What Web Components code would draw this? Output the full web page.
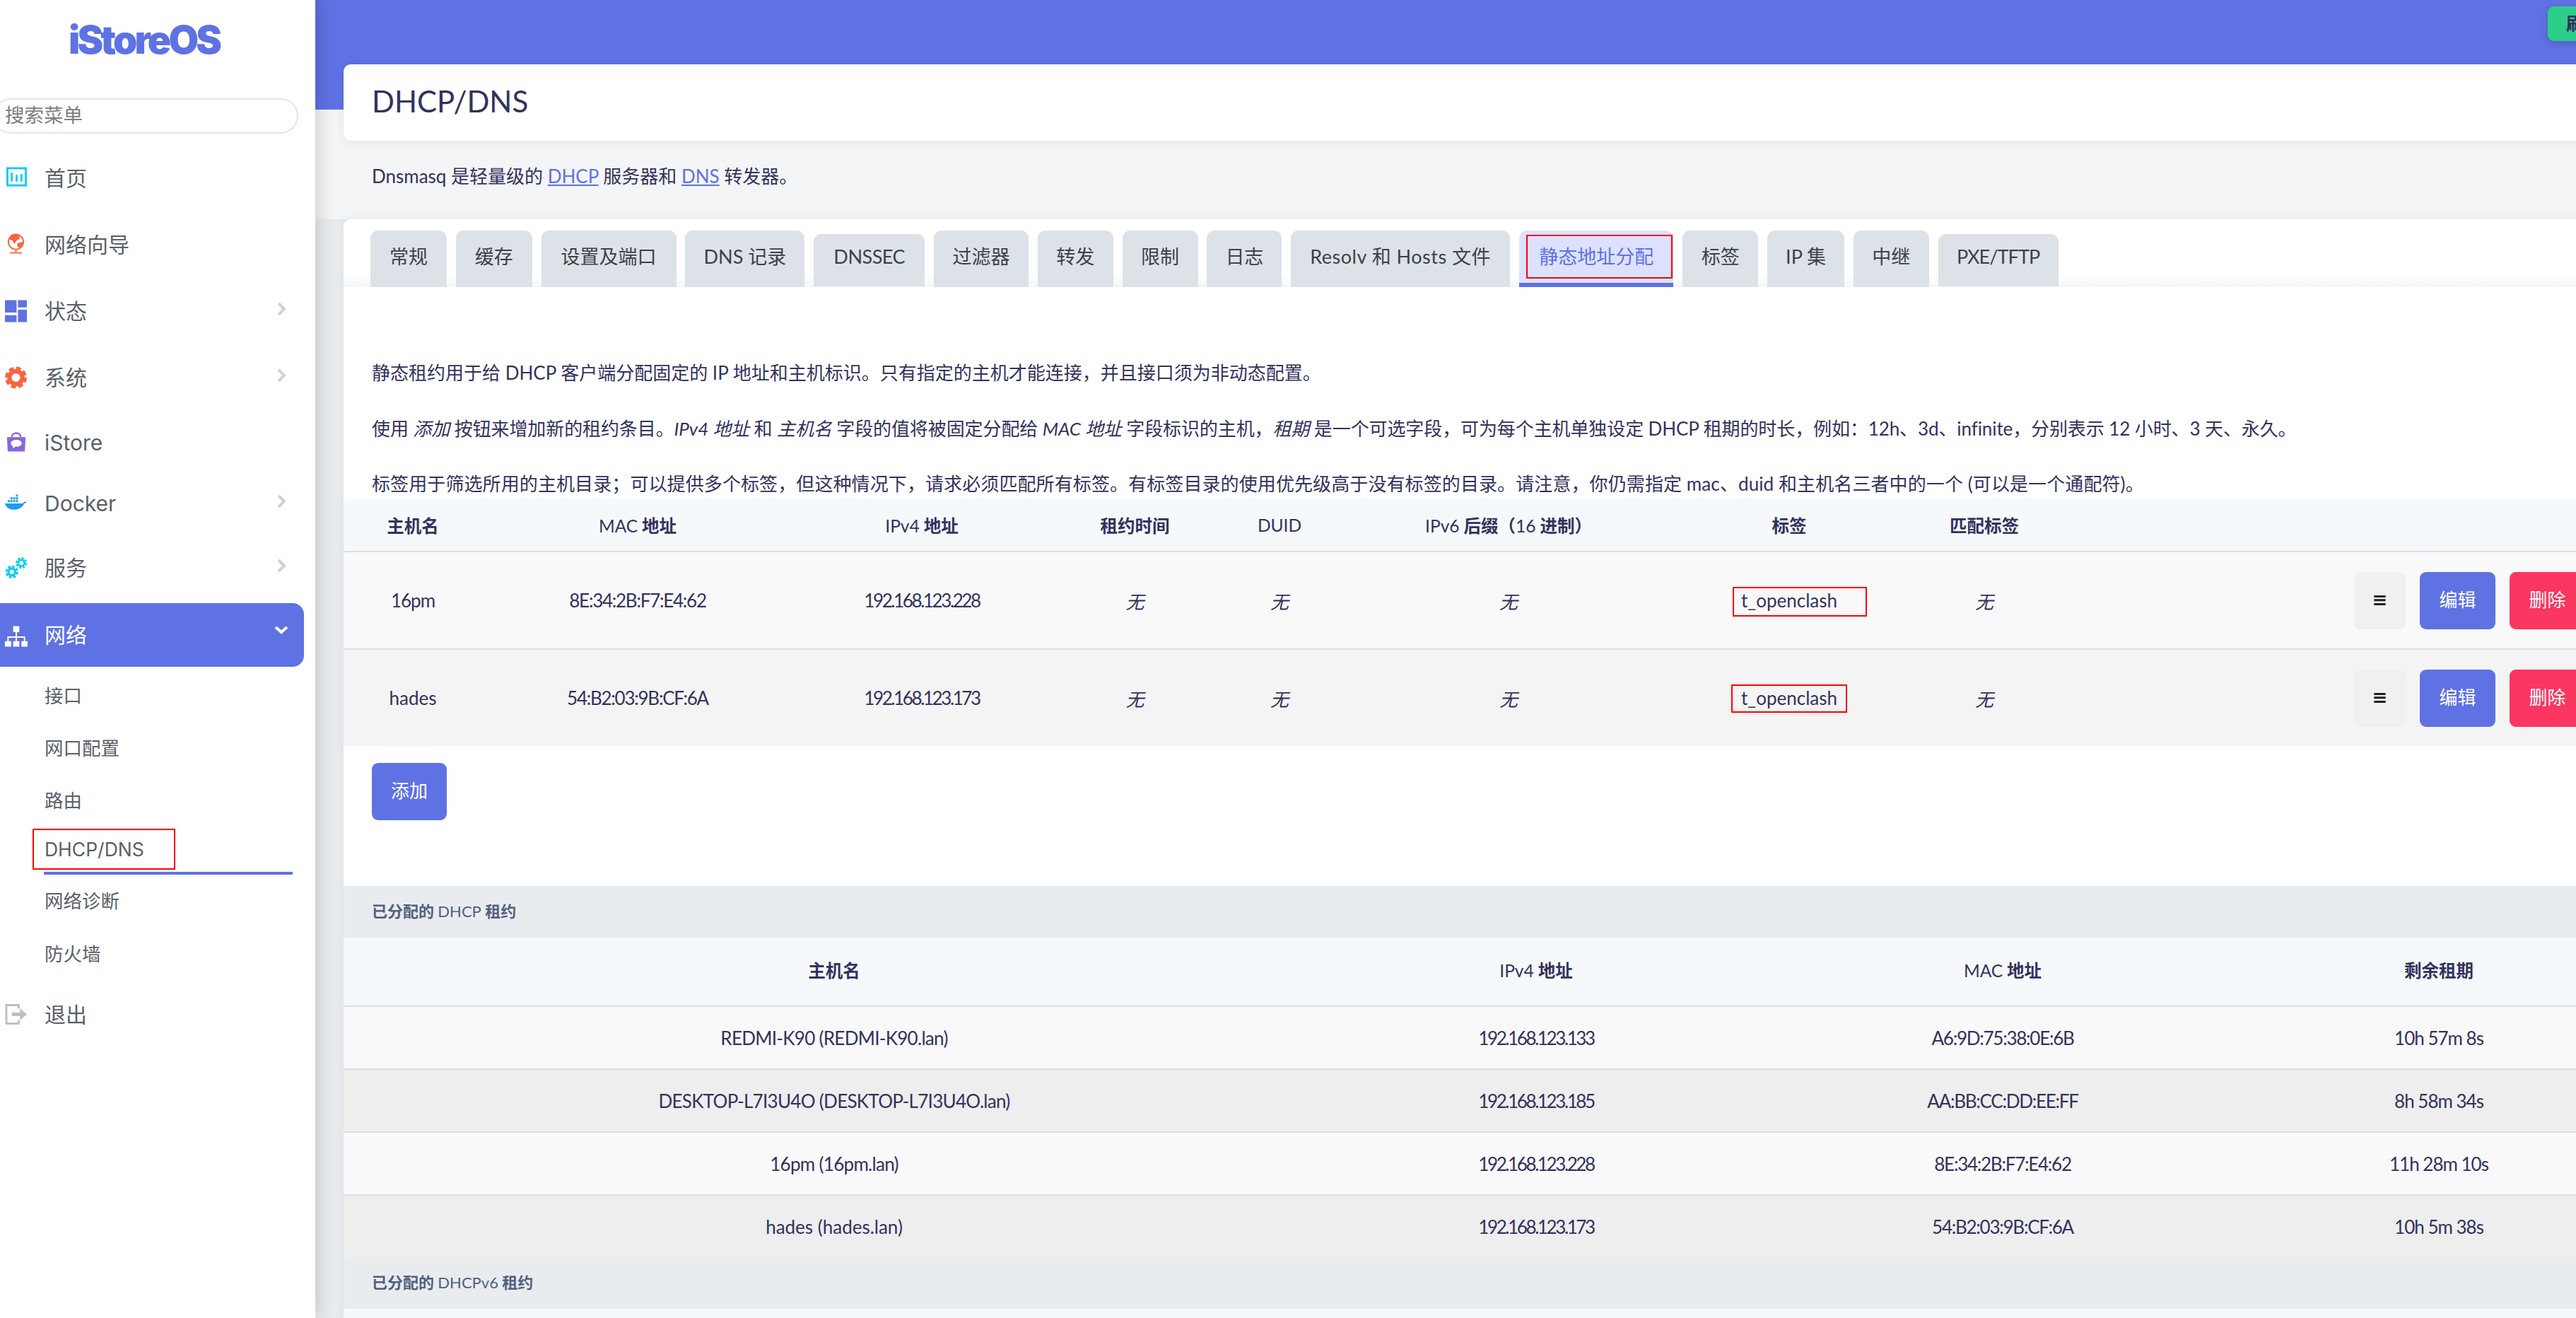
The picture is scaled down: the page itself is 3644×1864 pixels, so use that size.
<!doctype html>
<html lang="zh">
<head>
<meta charset="utf-8">
<title>DHCP/DNS</title>
<style>
	html, body {
		margin: 0;
		height: 100%;
		overflow: hidden;
	}
	body {
		display: flex;
		font-family: Lato, "Noto Sans CJK SC", sans-serif;
		font-size: 26px;
		color: #32325d;
		background: #f4f5f7;
	}
</style>
</head>
<body>
<side-bar>
	<nav-item h="94" label="首页" icon="home"></nav-item>
	<nav-item h="94" label="网络向导" icon="globe"></nav-item>
	<nav-item h="94" label="状态" icon="dash" arrow></nav-item>
	<nav-item h="94" label="系统" icon="gear" arrow></nav-item>
	<nav-item h="90" label="iStore" icon="bag"></nav-item>
	<nav-item h="82" label="Docker" icon="docker" arrow></nav-item>
	<nav-item h="100" label="服务" icon="gears" arrow></nav-item>
	<nav-item h="90" label="网络" icon="net" arrow active></nav-item>
	<sub-item h="74" top="4">接口</sub-item>
	<sub-item h="74">网口配置</sub-item>
	<sub-item h="74">路由</sub-item>
	<sub-item h="64" current>DHCP/DNS</sub-item>
	<sub-item h="74">网络诊断</sub-item>
	<sub-item h="74" top="1">防火墙</sub-item>
	<nav-item h="74" label="退出" icon="exit" top="12"></nav-item>
</side-bar>
<main-view>
	<page-title>DHCP/DNS</page-title>
	<page-desc>Dnsmasq 是轻量级的 <a>DHCP</a> 服务器和 <a>DNS</a> 转发器。</page-desc>
	<main-card>
		<tab-strip>
			<tab-item w="108">常规</tab-item>
			<tab-item w="108">缓存</tab-item>
			<tab-item w="191">设置及端口</tab-item>
			<tab-item w="169">DNS 记录</tab-item>
			<tab-item w="157" low ls="-.5">DNSSEC</tab-item>
			<tab-item w="134">过滤器</tab-item>
			<tab-item w="107">转发</tab-item>
			<tab-item w="107">限制</tab-item>
			<tab-item w="106">日志</tab-item>
			<tab-item w="310" ls=".5">Resolv 和 Hosts 文件</tab-item>
			<tab-item w="218.500" active>静态地址分配</tab-item>
			<tab-item w="107">标签</tab-item>
			<tab-item w="109">IP 集</tab-item>
			<tab-item w="107">中继</tab-item>
			<tab-item w="170" low ls="-.9">PXE/TFTP</tab-item>
		</tab-strip>
		<help-text>
			<p>静态租约用于给 DHCP 客户端分配固定的 IP 地址和主机标识。只有指定的主机才能连接，并且接口须为非动态配置。</p>
			<p style="letter-spacing:-.1px">使用 <em>添加</em> 按钮来增加新的租约条目。<em>IPv4 地址</em> 和 <em>主机名</em> 字段的值将被固定分配给 <em>MAC 地址</em> 字段标识的主机，<em>租期</em> 是一个可选字段，可为每个主机单独设定 DHCP 租期的时长，例如：12h、3d、infinite，分别表示 12 小时、3 天、永久。</p>
			<p style="letter-spacing:.1px">标签用于筛选所用的主机目录；可以提供多个标签，但这种情况下，请求必须匹配所有标签。有标签目录的使用优先级高于没有标签的目录。请注意，你仍需指定 mac、duid 和主机名三者中的一个 (可以是一个通配符)。</p>
		</help-text>
		<static-table></static-table>
		<add-row>添加</add-row>
		<section-head>已分配的 <span>DHCP</span> 租约</section-head>
		<lease-table></lease-table>
		<section-head>已分配的 <span>DHCPv6</span> 租约</section-head>
		<lease-stub></lease-stub>
	</main-card>
</main-view>

<script>
const icons = {
	home: `<rect x="3.5" y="2.5" width="27" height="25" fill="none" stroke="#11cdef" stroke-width="3"/><path d="M10 9v13M17 12v10M24 11v11" stroke="#11cdef" stroke-width="3"/>`,
	globe: `<circle cx="16" cy="13" r="11" fill="none" stroke="#fb6340" stroke-width="2"/><path d="M9 3c3-1 8-1 11 0l2 5-5 3-3 5-3-5-5-2zM18 15l8-2 1 3-6 6-3-3z" fill="#fb6340"/><path d="M16 25v3M7 29h18" stroke="#fb6340" stroke-width="2"/>`,
	dash: `<path d="M0 1h17v18H0zM19 1h13v10.500H19zM0 23h17v10H0zM19 15h13v18H19z" fill="#5e72e4"/>`,
	gear: `<circle cx="16" cy="17" r="9.500" fill="none" stroke="#fb6340" stroke-width="6.500"/><circle cx="16" cy="17" r="14" fill="none" stroke="#fb6340" stroke-width="4" stroke-dasharray="7 4"/>`,
	bag: `<path d="M3 9h27l-1 21H4z" fill="#8965e0"/><path d="M10 9c0-8 13-8 13 0" fill="none" stroke="#8965e0" stroke-width="2.500"/><ellipse cx="16.500" cy="18" rx="8" ry="5" fill="#fff"/><path d="M12 21l-1 4 5-2z" fill="#fff"/>`,
	docker: `<path d="M0 17h25c1.500 0 2.500-1 3-2.500 1 .5 2.500.5 4-.5-.5 1.500-2 3-4 3-2 6-8 9-15 9-7 0-11-3-13-9z" fill="#1d9bf0"/><path d="M4 12h3v3H4zM8 12h3v3H8zM12 12h3v3h-3zM16 12h3v3h-3zM8 8h3v3H8zM12 8h3v3h-3zM16 8h3v3h-3zM16 4h3v3h-3z" fill="#1d9bf0"/>`,
	gears: `<g fill="none" stroke="#11cdef"><circle cx="10" cy="23" r="5" stroke-width="3.500"/><circle cx="10" cy="23" r="8" stroke-width="3" stroke-dasharray="4 2.300"/><circle cx="24" cy="10" r="4.500" stroke-width="3"/><circle cx="24" cy="10" r="7" stroke-width="2.600" stroke-dasharray="3.500 2"/></g>`,
	net: `<path d="M12 4h9v9h-9zM0 26h9v8H0zM12 26h9v8h-9zM24 26h9v8h-9z" fill="#fff"/><path d="M16.500 13v13M4.500 26v-6h24v6" fill="none" stroke="#fff" stroke-width="2"/>`,
	exit: `<path d="M20 8V3H2v27h18v-5" fill="none" stroke="#b9bfc9" stroke-width="3"/><path d="M10 14h12V8l10 8.500L22 25v-6H10z" fill="#b9bfc9"/>`,
}

const mark = (style) => `<span style="position:absolute;box-sizing:border-box;border:2.500px solid #f00;${style}"></span>`

class SideBar extends HTMLElement {
	constructor() {
		super()
		this.attachShadow({mode: 'open'}).innerHTML = `
			<style>
				:host {
					display: block;
					position: relative;
					z-index: 2;
					flex: 0 0 446px;
					height: 100%;
					background: #fff;
					box-shadow: 0 0 26px rgba(0,0,0,.22);
					font-family: Inter, "Noto Sans CJK SC", sans-serif;
					color: #5a6069;
					overflow: hidden;
				}
				.logo {
					height: 139px;
					padding-left: 97px;
					box-sizing: border-box;
					font: 900 55px/112px Inter, sans-serif;
					letter-spacing: -3.800px;
					color: #5e72e4;
				}
				.search {
					box-sizing: border-box;
					height: 50px;
					width: 432px;
					margin: 0 0 16px -10px;
					padding-left: 15px;
					border: 2px solid #e3e6ea;
					border-radius: 25px;
					font-size: 27.500px;
					line-height: 44px;
					color: #7c7f84;
				}
			</style>
			<div class="logo">iStoreOS</div>
			<div class="search">搜索菜单</div>
			<slot></slot>`
	}
}

class NavItem extends HTMLElement {
	constructor() {
		super()
		const name = this.getAttribute('icon')
		const label = this.getAttribute('label')
		const active = this.hasAttribute('active')
		const arrow = !this.hasAttribute('arrow') ? '' : active
			? `<svg class="arrow down" viewBox="0 0 20 12"><path d="M2 2l8 7 8-7" fill="none" stroke="#fff" stroke-width="4"/></svg>`
			: `<svg class="arrow" viewBox="0 0 12 20"><path d="M2 2l8 8-8 8" fill="none" stroke="#ccd2da" stroke-width="4"/></svg>`
		this.attachShadow({mode: 'open'}).innerHTML = `
			<style>
				:host {
					display: block;
					height: ${this.getAttribute('h')}px;
					margin-top: ${this.getAttribute('top') || 0}px;
				}
				.row {
					display: flex;
					align-items: center;
					height: 100%;
					width: 430px;
					padding-left: 7px;
					box-sizing: border-box;
					font-size: 30px;
				}
				.row.on {
					background: #5e72e4;
					color: #fff;
					border-radius: 0 16px 16px 0;
				}
				.ico {
					flex: none;
					width: 32px;
					height: 34px;
					margin-right: 24px;
				}
				.label {
					padding-bottom: ${/^[a-z]/i.test(label) ? 0 : 4}px;
				}
				.arrow {
					width: 12px;
					height: 20px;
					position: absolute;
					left: 392px;
				}
				.arrow.down {
					width: 20px;
					height: 12px;
					left: 388px;
					margin-top: -14px;
				}
				.arrow:not(.down) {
					margin-top: -6px;
				}
			</style>
			<div class="row ${active ? 'on' : ''}">
				<svg class="ico" viewBox="0 0 33 34">${icons[name]}</svg>
				<span class="label">${label}</span>
				${arrow}
			</div>`
	}
}

class SubItem extends HTMLElement {
	constructor() {
		super()
		const current = this.hasAttribute('current')
		this.attachShadow({mode: 'open'}).innerHTML = `
			<style>
				:host {
					display: block;
					position: relative;
					box-sizing: content-box;
					height: ${this.getAttribute('h')}px;
					margin-top: ${this.getAttribute('top') || 0}px;
					line-height: ${this.getAttribute('h')}px;
					padding-left: 63px;
					font-size: 26.500px;
					${current ? 'padding-bottom: 4px;' : ''}
				}
				.line {
					position: absolute;
					left: 62px;
					top: 64px;
					width: 352px;
					height: 4px;
					background: #5e72e4;
				}
			</style>
			<slot></slot>
			${current ? `<div class="line"></div>${mark('left:46px;top:3px;width:202px;height:58px')}` : ''}`
	}
}

class MainView extends HTMLElement {
	constructor() {
		super()
		this.attachShadow({mode: 'open'}).innerHTML = `
			<style>
				:host {
					display: block;
					flex: 1 1 0;
					min-width: 0;
					height: 100%;
					overflow: hidden;
					background: linear-gradient(#5e72e4 155px, #f4f5f7 155px, #f4f5f7 310px, #e9ecef 310px);
				}
				.top {
					display: flex;
					justify-content: flex-end;
					height: 91px;
					box-sizing: border-box;
					padding-top: 9px;
				}
				.refresh {
					flex: none;
					width: 100px;
					height: 49px;
					margin-right: -60px;
					padding-left: 26px;
					box-sizing: border-box;
					background: #2dce89;
					border-radius: 9px;
					box-shadow: 0 3px 8px rgba(50,50,93,.3);
					font-weight: 700;
					line-height: 49px;
					white-space: nowrap;
					overflow: hidden;
				}
				.body {
					width: 3300px;
					margin-left: 40px;
				}
			</style>
			<div class="top"><div class="refresh">刷新</div></div>
			<div class="body"><slot></slot></div>`
	}
}

class PageTitle extends HTMLElement {
	constructor() {
		super()
		this.attachShadow({mode: 'open'}).innerHTML = `
			<style>
				:host {
					display: block;
					height: 108px;
					padding-left: 40px;
					background: #fff;
					border-radius: 10px 0 0 10px;
					box-shadow: 0 2px 16px rgba(0,0,0,.07);
					font-size: 42px;
					line-height: 104px;
				}
			</style>
			<slot></slot>`
	}
}

class PageDesc extends HTMLElement {
	constructor() {
		super()
		this.attachShadow({mode: 'open'}).innerHTML = `
			<style>
				:host {
					display: block;
					height: 111px;
					padding-left: 40px;
					line-height: 100px;
				}
				::slotted(a) {
					color: #5e72e4;
					text-decoration: underline;
				}
			</style>
			<slot></slot>`
	}
}

class MainCard extends HTMLElement {
	constructor() {
		super()
		this.attachShadow({mode: 'open'}).innerHTML = `
			<style>
				:host {
					display: block;
					background: #fff;
					border-radius: 10px 0 0 0;
					box-shadow: 0 -2px 16px rgba(0,0,0,.05);
					height: 1600px;
				}
			</style>
			<slot></slot>`
	}
}

class TabStrip extends HTMLElement {
	constructor() {
		super()
		this.attachShadow({mode: 'open'}).innerHTML = `
			<style>
				:host {
					display: flex;
					align-items: flex-start;
					gap: 12.800px;
					height: 96px;
					box-sizing: border-box;
					padding: 16px 0 0 38px;
					background: linear-gradient(#fff 80%, #f5f6f8);
					border-radius: 10px 0 0 0;
				}
			</style>
			<slot></slot>`
	}
}

class TabItem extends HTMLElement {
	constructor() {
		super()
		const active = this.hasAttribute('active')
		const low = this.hasAttribute('low')
		this.attachShadow({mode: 'open'}).innerHTML = `
			<style>
				:host {
					display: block;
					position: relative;
					flex: none;
					box-sizing: border-box;
					width: ${this.getAttribute('w')}px;
					height: ${low ? 74 : 80}px;
					margin-top: ${low ? 5 : 0}px;
					text-align: center;
					background: ${active ? '#dde1ff' : '#dce2e7'};
					border-radius: 11px 11px 0 0;
					${active ? 'border-bottom: 6px solid #5e72e4;' : ''}
					color: ${active ? '#5e72e4' : '#3d4147'};
					font-size: 27px;
					letter-spacing: ${this.getAttribute('ls') || 0}px;
					line-height: ${low ? 64 : 74}px;
					white-space: nowrap;
				}
			</style>
			<slot></slot>
			${active ? mark('left:10.500px;top:6px;width:207px;height:62px') : ''}`
	}
}

class HelpText extends HTMLElement {
	constructor() {
		super()
		this.attachShadow({mode: 'open'}).innerHTML = `
			<style>
				:host {
					display: block;
					box-sizing: border-box;
					height: 299px;
					padding: 102px 0 0 40px;
				}
				::slotted(p) {
					margin: 0 0 39.500px;
					line-height: 39px;
					white-space: nowrap;
				}
			</style>
			<slot></slot>`
	}
}

const tableCss = `
	:host { display: block; }
	table {
		border-collapse: collapse;
		table-layout: fixed;
		text-align: center;
	}
	th, td { padding: 0; }
	th {
		background: #f6f9fc;
		font-weight: 700;
		font-size: 24.500px;
		border-bottom: 2px solid #dedede;
	}
	th span { font-weight: 400; }
	em { font-style: italic; }
	.ip { letter-spacing: -2.400px; }
	.mac { letter-spacing: -1.250px; }
	.left { letter-spacing: -1px; }
	.host { letter-spacing: -.7px; }
`

class StaticTable extends HTMLElement {
	constructor() {
		super()
		const cols = [196, 440, 364, 239, 170, 478, 316, 236, 780]
		const heads = ['主机名', '<span>MAC</span> 地址', '<span>IPv4</span> 地址', '租约时间', '<span>DUID</span>', '<span>IPv6</span> 后缀（<span>16</span> 进制）', '标签', '匹配标签', '']
		const rows = [
			['16pm', '8E:34:2B:F7:E4:62', '192.168.123.228', 'left:-80px;top:-19px;width:190px;height:42px', '-1px'],
			['hades', '54:B2:03:9B:CF:6A', '192.168.123.173', 'left:-82px;top:-19px;width:164px;height:40px', '0'],
		]
		const none = '<td><em>无</em></td>'
		this.attachShadow({mode: 'open'}).innerHTML = `
			<style>
				${tableCss}
				th { height: 74px; }
				td { height: 136px; }
				tbody tr:nth-child(1) td { background: #f9f9f9; border-bottom: 2px solid #dedede; }
				tbody tr:nth-child(2) td { background: #f4f4f4; }
				.tag { position: relative; display: inline-block; letter-spacing: 0; }
				.tag i { position: absolute; left: 50%; top: 50%; }
				.acts {
					display: flex;
					gap: 20px;
					padding-left: 405px;
				}
				.acts span {
					flex: none;
					width: 107px;
					height: 81px;
					border-radius: 9px;
					line-height: 78px;
					color: #fff;
				}
				.acts .sort { width: 73px; background: #f0f0f0; color: #222; font-family: "DejaVu Sans", sans-serif; font-weight: 700; }
				.acts .edit { background: #5e72e4; }
				.acts .del { background: #fb3660; }
			</style>
			<table style="width:${cols.reduce((a, b) => a + b)}px">
				<colgroup>${cols.map(w => `<col style="width:${w}px">`).join('')}</colgroup>
				<thead><tr>${heads.map(h => `<th>${h}</th>`).join('')}</tr></thead>
				<tbody>${rows.map(r => `
					<tr>
						<td style="letter-spacing:${r[4]}">${r[0]}</td>
						<td class="mac">${r[1]}</td>
						<td class="ip">${r[2]}</td>
						${none}${none}${none}
						<td><span class="tag">t_openclash<i>${mark(r[3])}</i></span></td>
						${none}
						<td><div class="acts"><span class="sort">≡</span><span class="edit">编辑</span><span class="del">删除</span></div></td>
					</tr>`).join('')}
				</tbody>
			</table>`
	}
}

class AddRow extends HTMLElement {
	constructor() {
		super()
		this.attachShadow({mode: 'open'}).innerHTML = `
			<style>
				:host {
					display: block;
					height: 198px;
					box-sizing: border-box;
					padding: 24px 0 0 40px;
				}
				span {
					display: block;
					width: 106px;
					height: 81px;
					background: #5e72e4;
					border-radius: 9px;
					color: #fff;
					text-align: center;
					line-height: 78px;
				}
			</style>
			<span><slot></slot></span>`
	}
}

class SectionHead extends HTMLElement {
	constructor() {
		super()
		this.attachShadow({mode: 'open'}).innerHTML = `
			<style>
				:host {
					display: block;
					height: 73px;
					padding-left: 40px;
					background: #e9ecef;
					color: #525f7f;
					font-size: 22px;
					font-weight: 700;
					line-height: 71px;
				}
				::slotted(span) {
					font-weight: 400;
				}
			</style>
			<slot></slot>`
	}
}

class LeaseTable extends HTMLElement {
	constructor() {
		super()
		const cols = [1388, 598, 722, 512]
		const heads = ['主机名', '<span>IPv4</span> 地址', '<span>MAC</span> 地址', '剩余租期']
		const rows = [
			['REDMI-K90 (REDMI-K90.lan)', '192.168.123.133', 'A6:9D:75:38:0E:6B', '10h 57m 8s'],
			['DESKTOP-L7I3U4O (DESKTOP-L7I3U4O.lan)', '192.168.123.185', 'AA:BB:CC:DD:EE:FF', '8h 58m 34s'],
			['16pm (16pm.lan)', '192.168.123.228', '8E:34:2B:F7:E4:62', '11h 28m 10s'],
			['hades (hades.lan)', '192.168.123.173', '54:B2:03:9B:CF:6A', '10h 5m 38s'],
		]
		this.attachShadow({mode: 'open'}).innerHTML = `
			<style>
				${tableCss}
				th { height: 97px; padding-bottom: 6px; box-sizing: border-box; }
				td { height: 87px; }
				tbody tr:nth-child(odd) td { background: #f9f9f9; }
				tbody tr:nth-child(even) td { background: #eee; }
				tbody tr:not(:last-child) td { border-bottom: 2px solid #dedede; }
				tbody tr:last-child .host { letter-spacing: 0; }
			</style>
			<table style="width:${cols.reduce((a, b) => a + b)}px">
				<colgroup>${cols.map(w => `<col style="width:${w}px">`).join('')}</colgroup>
				<thead><tr>${heads.map(h => `<th>${h}</th>`).join('')}</tr></thead>
				<tbody>${rows.map(r => `<tr><td class="host">${r[0]}</td><td class="ip">${r[1]}</td><td class="mac">${r[2]}</td><td class="left">${r[3]}</td></tr>`).join('')}</tbody>
			</table>`
	}
}

class LeaseStub extends HTMLElement {
	constructor() {
		super()
		this.attachShadow({mode: 'open'}).innerHTML = `
			<style>
				:host {
					display: block;
					height: 97px;
					background: #f6f9fc;
				}
			</style>`
	}
}

customElements.define('side-bar', SideBar)
customElements.define('nav-item', NavItem)
customElements.define('sub-item', SubItem)
customElements.define('main-view', MainView)
customElements.define('page-title', PageTitle)
customElements.define('page-desc', PageDesc)
customElements.define('main-card', MainCard)
customElements.define('tab-strip', TabStrip)
customElements.define('tab-item', TabItem)
customElements.define('help-text', HelpText)
customElements.define('static-table', StaticTable)
customElements.define('add-row', AddRow)
customElements.define('section-head', SectionHead)
customElements.define('lease-table', LeaseTable)
customElements.define('lease-stub', LeaseStub)
</script>
</body>
</html>
